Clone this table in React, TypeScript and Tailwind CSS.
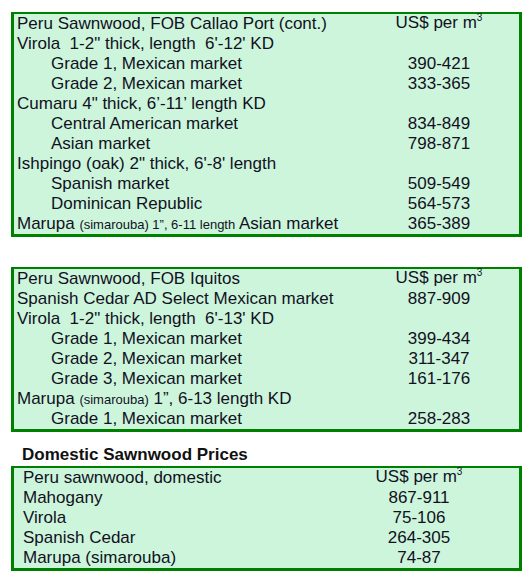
const font = { fontFamily: '"Liberation Sans", Arial, sans-serif' }

type Row = { label: React.ReactNode; price?: string; indent?: boolean; head?: boolean }

function PerM3() {
    return (
        <span>
            US$ per m<span className="relative -top-[7px] text-[10px]">3</span>
        </span>
    )
}

function PriceTable({ rows, priceWidth, padLeft }: { rows: Row[]; priceWidth: string; padLeft: string }) {
    return (
        <div className="border-[3px] border-t-2 border-[#008000] bg-[#cdf5dc]">
            {rows.map((r, i) => (
                <div key={i} className={`flex h-[20px] items-center leading-[20px] ${padLeft}`}>
                    <div className={`flex-1 whitespace-pre ${r.indent ? 'pl-[34px]' : ''}`}>{r.label}</div>
                    <div className={`${priceWidth} text-center whitespace-nowrap`}>{r.head ? <PerM3 /> : r.price}</div>
                </div>
            ))}
        </div>
    )
}

const callao: Row[] = [
    { label: 'Peru Sawnwood, FOB Callao Port (cont.)', head: true },
    { label: 'Virola  1-2" thick, length  6\'-12\' KD' },
    { label: 'Grade 1, Mexican market', price: '390-421', indent: true },
    { label: 'Grade 2, Mexican market', price: '333-365', indent: true },
    { label: 'Cumaru 4" thick, 6’-11’ length KD' },
    { label: 'Central American market', price: '834-849', indent: true },
    { label: 'Asian market', price: '798-871', indent: true },
    { label: 'Ishpingo (oak) 2" thick, 6\'-8\' length' },
    { label: 'Spanish market', price: '509-549', indent: true },
    { label: 'Dominican Republic', price: '564-573', indent: true },
    {
        label: (
            <span>
                Marupa <span className="text-[13px]">(simarouba) 1”, 6-11 length</span> Asian market
            </span>
        ),
        price: '365-389',
    },
]

const iquitos: Row[] = [
    { label: 'Peru Sawnwood, FOB Iquitos', head: true },
    { label: 'Spanish Cedar AD Select Mexican market', price: '887-909' },
    { label: 'Virola  1-2" thick, length  6\'-13\' KD' },
    { label: 'Grade 1, Mexican market', price: '399-434', indent: true },
    { label: 'Grade 2, Mexican market', price: '311-347', indent: true },
    { label: 'Grade 3, Mexican market', price: '161-176', indent: true },
    {
        label: (
            <span>
                Marupa <span className="text-[13px]">(simarouba)</span> 1”, 6-13 length KD
            </span>
        ),
    },
    { label: 'Grade 1, Mexican market', price: '258-283', indent: true },
]

const domestic: Row[] = [
    { label: 'Peru sawnwood, domestic', head: true },
    { label: 'Mahogany', price: '867-911' },
    { label: 'Virola', price: '75-106' },
    { label: 'Spanish Cedar', price: '264-305' },
    { label: 'Marupa (simarouba)', price: '74-87' },
]

export default function App() {
    return (
        <div className="w-[528px] h-[571px] bg-white text-[17px] text-[#111122] pt-[12px] pl-[11px]" style={font}>
            <div className="w-[511px]">
                <PriceTable rows={callao} priceWidth="w-[160px]" padLeft="pl-[3px]" />
                <div className="h-[30px]" />
                <PriceTable rows={iquitos} priceWidth="w-[160px]" padLeft="pl-[3px]" />
                <div className="mt-[13px] pl-[11px] font-bold leading-[20px] text-[#111]">Domestic Sawnwood Prices</div>
                <div className="mt-[1px]">
                    <PriceTable rows={domestic} priceWidth="w-[200px]" padLeft="pl-[9px]" />
                </div>
            </div>
        </div>
    )
}
